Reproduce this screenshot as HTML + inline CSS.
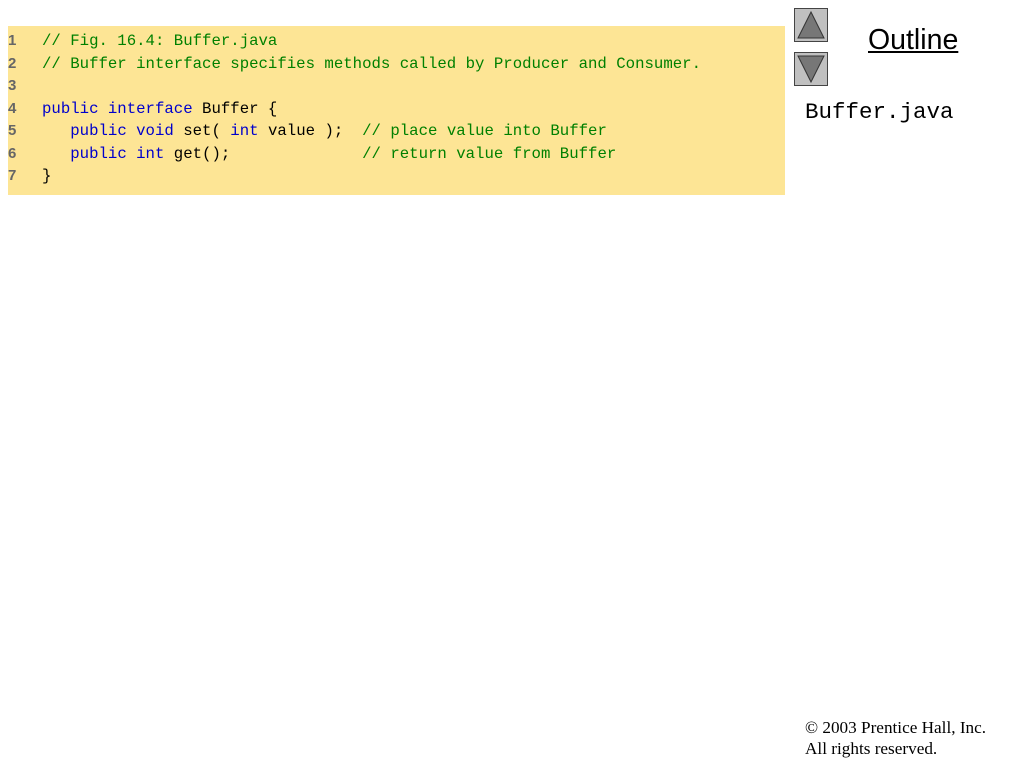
<!DOCTYPE html>
<html><head><style>
body{margin:0;width:1024px;height:768px;background:#fff;position:relative;overflow:hidden;font-family:"Liberation Sans",sans-serif}
.code{position:absolute;left:8px;top:26px;width:777px;height:169px;background:#fde595}
.lines{position:absolute;left:0;top:4px;font-family:"Liberation Mono",monospace;font-size:15.7px;color:#000}
.l{height:22.5px;line-height:22.5px;white-space:pre}
.n{color:#666;font-weight:bold;font-family:"Liberation Sans",sans-serif;font-size:15px;display:inline-block;width:34px;line-height:22.5px;vertical-align:top}
.c{color:#008000}.k{color:#0000cc}
.btn{position:absolute;left:794px;width:32px;height:32px;background:#c0c0c0;border:1px solid #444}
.out{position:absolute;left:868px;top:24px;font-size:28.5px;text-decoration:underline;color:#000}
.bj{position:absolute;left:805px;top:99px;font-family:"Liberation Mono",monospace;font-size:22.5px}
.copy{position:absolute;left:805px;top:717px;font-family:"Liberation Serif",serif;font-size:17.2px;line-height:21px}
</style></head><body>
<div class="code"><div class="lines">
<div class="l"><span class="n">1</span><span class="c">// Fig. 16.4: Buffer.java</span></div>
<div class="l"><span class="n">2</span><span class="c">// Buffer interface specifies methods called by Producer and Consumer.</span></div>
<div class="l"><span class="n">3</span></div>
<div class="l"><span class="n">4</span><span class="k">public interface</span> Buffer {</div>
<div class="l"><span class="n">5</span>   <span class="k">public void</span> set( <span class="k">int</span> value );  <span class="c">// place value into Buffer</span></div>
<div class="l"><span class="n">6</span>   <span class="k">public int</span> get();              <span class="c">// return value from Buffer</span></div>
<div class="l"><span class="n">7</span>}</div>
</div></div>
<div class="btn" style="top:8px"><svg width="32" height="32"><polygon points="16,3 29,29 3,29" fill="#777" stroke="#333"/></svg></div>
<div class="btn" style="top:52px"><svg width="32" height="32"><polygon points="3,3 29,3 16,29" fill="#777" stroke="#333"/></svg></div>
<div class="out">Outline</div>
<div class="bj">Buffer.java</div>
<div class="copy">© 2003 Prentice Hall, Inc.<br>All rights reserved.</div>
</body></html>
